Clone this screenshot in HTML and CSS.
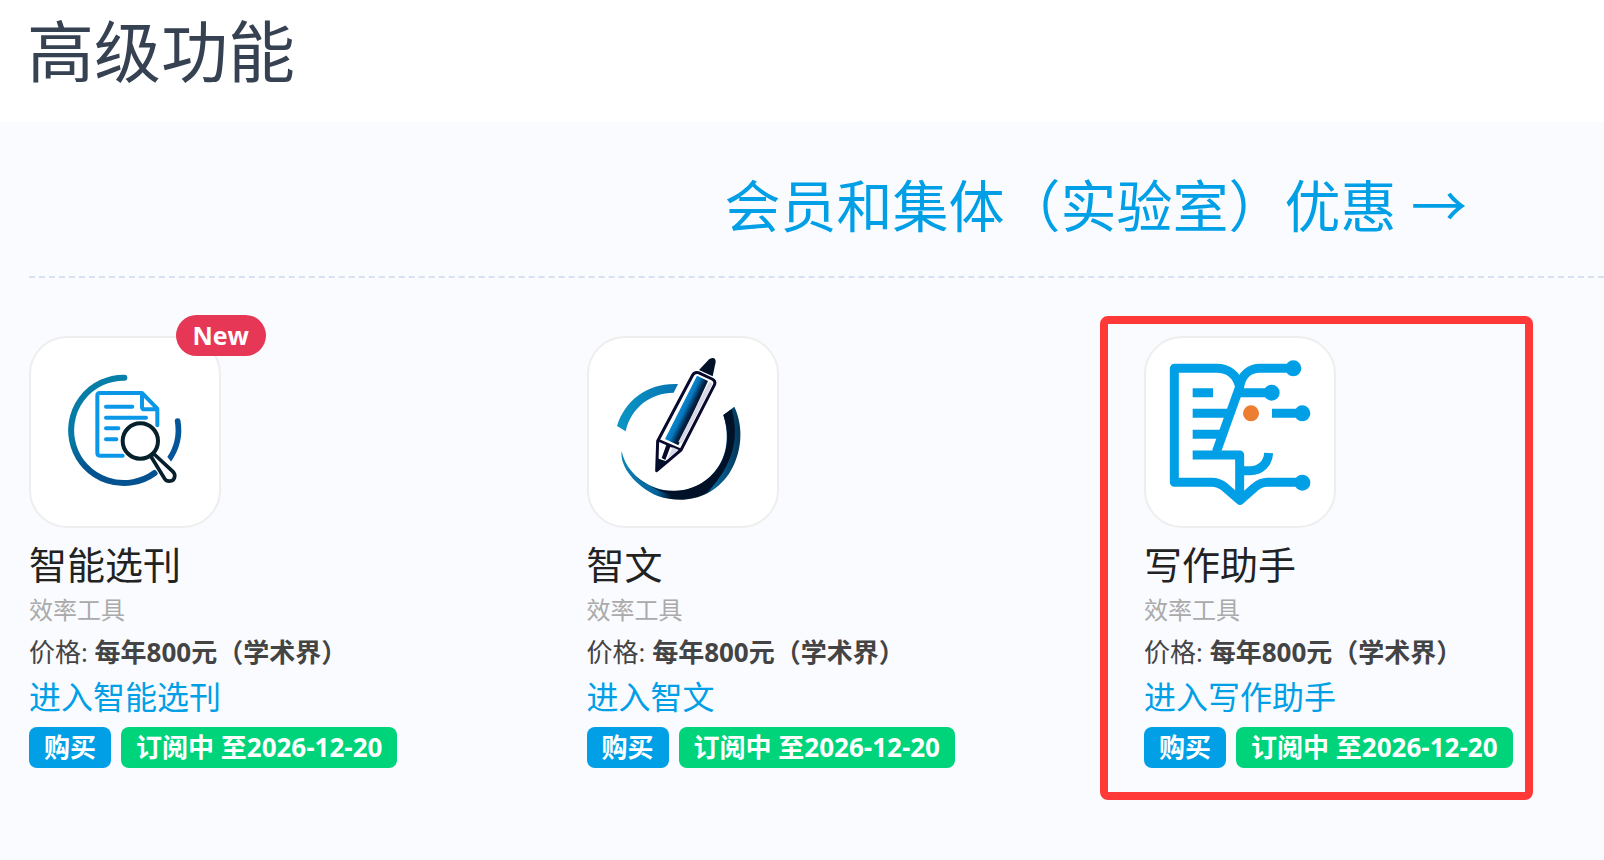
FILE: index.html
```html
<!DOCTYPE html>
<html lang="zh-CN">
<head>
  <meta charset="UTF-8" />
  <meta name="viewport" content="width=device-width, initial-scale=1.0"/>
  <title>高级功能</title>
  <link rel="stylesheet" href="styles.css">
</head>
<body>
  <header class="page-header">
    <h1>高级功能</h1>
  </header>
  <main class="content">
    <div class="offer">
      <a href="#offer">会员和集体（实验室）优惠 →</a>
    </div>
    <div class="product-list">
      <article class="product">
        <div class="icon-box">
          <svg viewBox="33 114 564 564" fill="none" stroke-linecap="round" stroke-linejoin="round" aria-hidden="true">
            <defs>
              <linearGradient id="ring" x1="0" y1="225" x2="0" y2="555" gradientUnits="userSpaceOnUse">
                <stop offset="0" stop-color="#067fa9"/>
                <stop offset="0.6" stop-color="#0678a4"/>
                <stop offset="0.85" stop-color="#04528f"/>
              </linearGradient>
            </defs>
            <path d="M313 233A158 158 0 1 0 404 519" stroke="url(#ring)" stroke-width="18"/>
            <path d="M473 363A157 157 0 0 1 446 480" stroke="#04559a" stroke-width="17"/>
            <path d="M308 467H240Q232 467 232 459V287Q232 279 240 279H366L412 326V376M366 281V320Q366 328 374 328H410" stroke="#0b97e8" stroke-width="12"/>
            <path d="M258 320H337M258 353H378M258 385H295M258 418H289" stroke="#0b97e8" stroke-width="12"/>
            <path d="M418 512L398 488M436 476L455 500" stroke="#fff" stroke-width="16"/>
            <path d="M392 468L434 536C442 548 462 545 464 530Q466 522 458 514L402 462Z" fill="#fff" stroke="#06202c" stroke-width="11"/>
            <circle cx="361" cy="423" r="53" fill="#fff" stroke="#06202c" stroke-width="12"/>
          </svg>
          <span class="badge">New</span>
        </div>
        <h2>智能选刊</h2>
        <p class="category">效率工具</p>
        <p class="price">价格: <strong>每年800元（学术界）</strong></p>
        <a class="enter" href="#journal">进入智能选刊</a>
        <div class="actions">
          <button class="btn buy" type="button">购买</button>
          <button class="btn active" type="button">订阅中 至2026-12-20</button>
        </div>
      </article>
      <article class="product">
        <div class="icon-box">
          <svg viewBox="54 54 564 564" aria-hidden="true">
            <defs>
              <linearGradient id="arc" x1="140" y1="0" x2="320" y2="0" gradientUnits="userSpaceOnUse">
                <stop offset="0" stop-color="#0a96c4"/>
                <stop offset="1" stop-color="#0574b2"/>
              </linearGradient>
              <linearGradient id="crescent" x1="150" y1="0" x2="510" y2="0" gradientUnits="userSpaceOnUse">
                <stop offset="0" stop-color="#0a83b6"/>
                <stop offset="0.3" stop-color="#06629b"/>
                <stop offset="0.42" stop-color="#011329"/>
                <stop offset="0.68" stop-color="#011329"/>
                <stop offset="0.76" stop-color="#07699e"/>
                <stop offset="1" stop-color="#043455"/>
              </linearGradient>
              <linearGradient id="barrel" x1="312" y1="250" x2="374" y2="280" gradientUnits="userSpaceOnUse">
                <stop offset="0" stop-color="#1298dc"/>
                <stop offset="0.5" stop-color="#0678c0"/>
                <stop offset="0.75" stop-color="#022344"/>
                <stop offset="1" stop-color="#010a20"/>
              </linearGradient>
            </defs>
            <path d="M138 318C162 240 230 188 321 192L308 218C240 218 180 262 164 334Z" fill="url(#arc)"/>
            <path d="M152 393C165 460 235 515 312 512C420 510 496 410 457 285L490 260C520 325 512 400 475 460C425 535 340 555 260 528C195 500 145 440 152 393Z" fill="url(#crescent)"/>
            <path d="M190 465C250 522 320 520 360 505C450 470 491 380 457 285L482 268C505 350 490 430 410 517C350 547 260 525 190 465Z" fill="#011128"/>
            <path d="M384 150L415 117Q434 108 434 126L425 169Z" fill="#011128"/>
            <path d="M365 165Q371 155 382 158L423 177Q434 182 431 193L330 390L257 452L260 363Z" fill="#fff" stroke="#08092d" stroke-width="9" stroke-linejoin="round"/>
            <path d="M378 167L282 357L322 376L411 183Z" fill="url(#barrel)"/>
            <path d="M414 186L425 191L333 370L322 366Z" fill="#d9d8e7"/>
            <path d="M262 361L330 390" stroke="#08092d" stroke-width="8"/>
            <path d="M287 372L299 378L283 420L272 414Z" fill="#08092d"/>
            <path d="M305 382L322 389L288 420Z" fill="#d9d8e7"/>
            <path d="M258 415L286 424L256 454Z" fill="#011128"/>
          </svg>
        </div>
        <h2>智文</h2>
        <p class="category">效率工具</p>
        <p class="price">价格: <strong>每年800元（学术界）</strong></p>
        <a class="enter" href="#zhiwen">进入智文</a>
        <div class="actions">
          <button class="btn buy" type="button">购买</button>
          <button class="btn active" type="button">订阅中 至2026-12-20</button>
        </div>
      </article>
      <article class="product highlighted">
        <div class="icon-box">
          <svg viewBox="168 99 564 564" fill="none" stroke="#019fe6" stroke-width="27" stroke-linejoin="round" aria-hidden="true">
            <path d="M449 245C440 210 415 190 380 190H253V532H365Q386 532 405 547L450 586L494 547Q512 532 532 532H637"/>
            <path d="M308 450H449V580"/>
            <path d="M610 190H510C480 190 455 208 449 245L379 441"/>
            <path d="M308 263H369M308 325H412M308 388H390M449 263H545M546 325H637"/>
            <path d="M450 497H480C512 497 534 475 536 444"/>
            <g fill="#019fe6" stroke="none">
              <circle cx="610" cy="190" r="24"/>
              <circle cx="545" cy="263" r="24"/>
              <circle cx="637" cy="325" r="24"/>
              <circle cx="637" cy="533" r="24"/>
            </g>
            <circle cx="483" cy="325" r="24" fill="#ed7d31" stroke="none"/>
          </svg>
        </div>
        <h2>写作助手</h2>
        <p class="category">效率工具</p>
        <p class="price">价格: <strong>每年800元（学术界）</strong></p>
        <a class="enter" href="#writing">进入写作助手</a>
        <div class="actions">
          <button class="btn buy" type="button">购买</button>
          <button class="btn active" type="button">订阅中 至2026-12-20</button>
        </div>
      </article>
    </div>
  </main>
</body>
</html>
```
FILE: styles.css
```css
* {
  box-sizing: border-box;
}
body {
  margin: 0;
  min-height: 100vh;
  background: #f9fbff;
  font-family: "Open Sans", "Noto Sans CJK SC", sans-serif;
  color: #222;
}
h1, h2, p {
  margin: 0;
  font-weight: 400;
}
a {
  color: #019fe6;
  text-decoration: none;
}
.page-header {
  padding: 3px 27px 23px;
  background: #fff;
}
h1 {
  font-size: 67px;
  line-height: 96px;
  color: #364152;
}
.content {
  padding-left: 29px;
}
.offer {
  padding: 43px 137px 31px 0;
  border-bottom: 2px dashed #d8e1ef;
  text-align: right;
  font-size: 56px;
  line-height: 80px;
}
.product-list {
  display: grid;
  grid-template-columns: 35.4% 35.4% 1fr;
  padding: 58px 0 40px;
}
.product {
  position: relative;
  justify-self: start;
}
.highlighted::after {
  content: "";
  position: absolute;
  inset: -20px -20px -32px -44px;
  border: 8px solid #ff3838;
  border-radius: 8px;
  pointer-events: none;
}
.icon-box {
  position: relative;
  width: 192px;
  height: 192px;
  margin-bottom: 10px;
  border: 2px solid #eee;
  border-radius: 38px;
  background: #fff;
}
.icon-box svg {
  display: block;
  width: 100%;
}
.badge {
  position: absolute;
  top: -23px;
  right: -47px;
  padding: 0 17px;
  border-radius: 21px;
  background: #e63757;
  color: #fff;
  font-size: 25px;
  font-weight: 700;
  line-height: 41px;
}
h2 {
  font-size: 38px;
  line-height: 52px;
}
.category {
  font-size: 24px;
  line-height: 40px;
  color: #aaa;
}
.price {
  font-size: 26px;
  line-height: 44px;
  color: #444;
}
.enter {
  display: block;
  font-size: 32px;
  line-height: 46px;
}
.actions {
  display: flex;
  gap: 10px;
  margin-top: 7px;
}
.btn {
  padding: 0 15px;
  border: 0;
  border-radius: 8px;
  color: #fff;
  font-family: inherit;
  font-size: 26px;
  font-weight: 700;
  line-height: 41px;
  white-space: nowrap;
}
.buy {
  background: #019fe6;
}
.active {
  background: #00d47b;
}
```
